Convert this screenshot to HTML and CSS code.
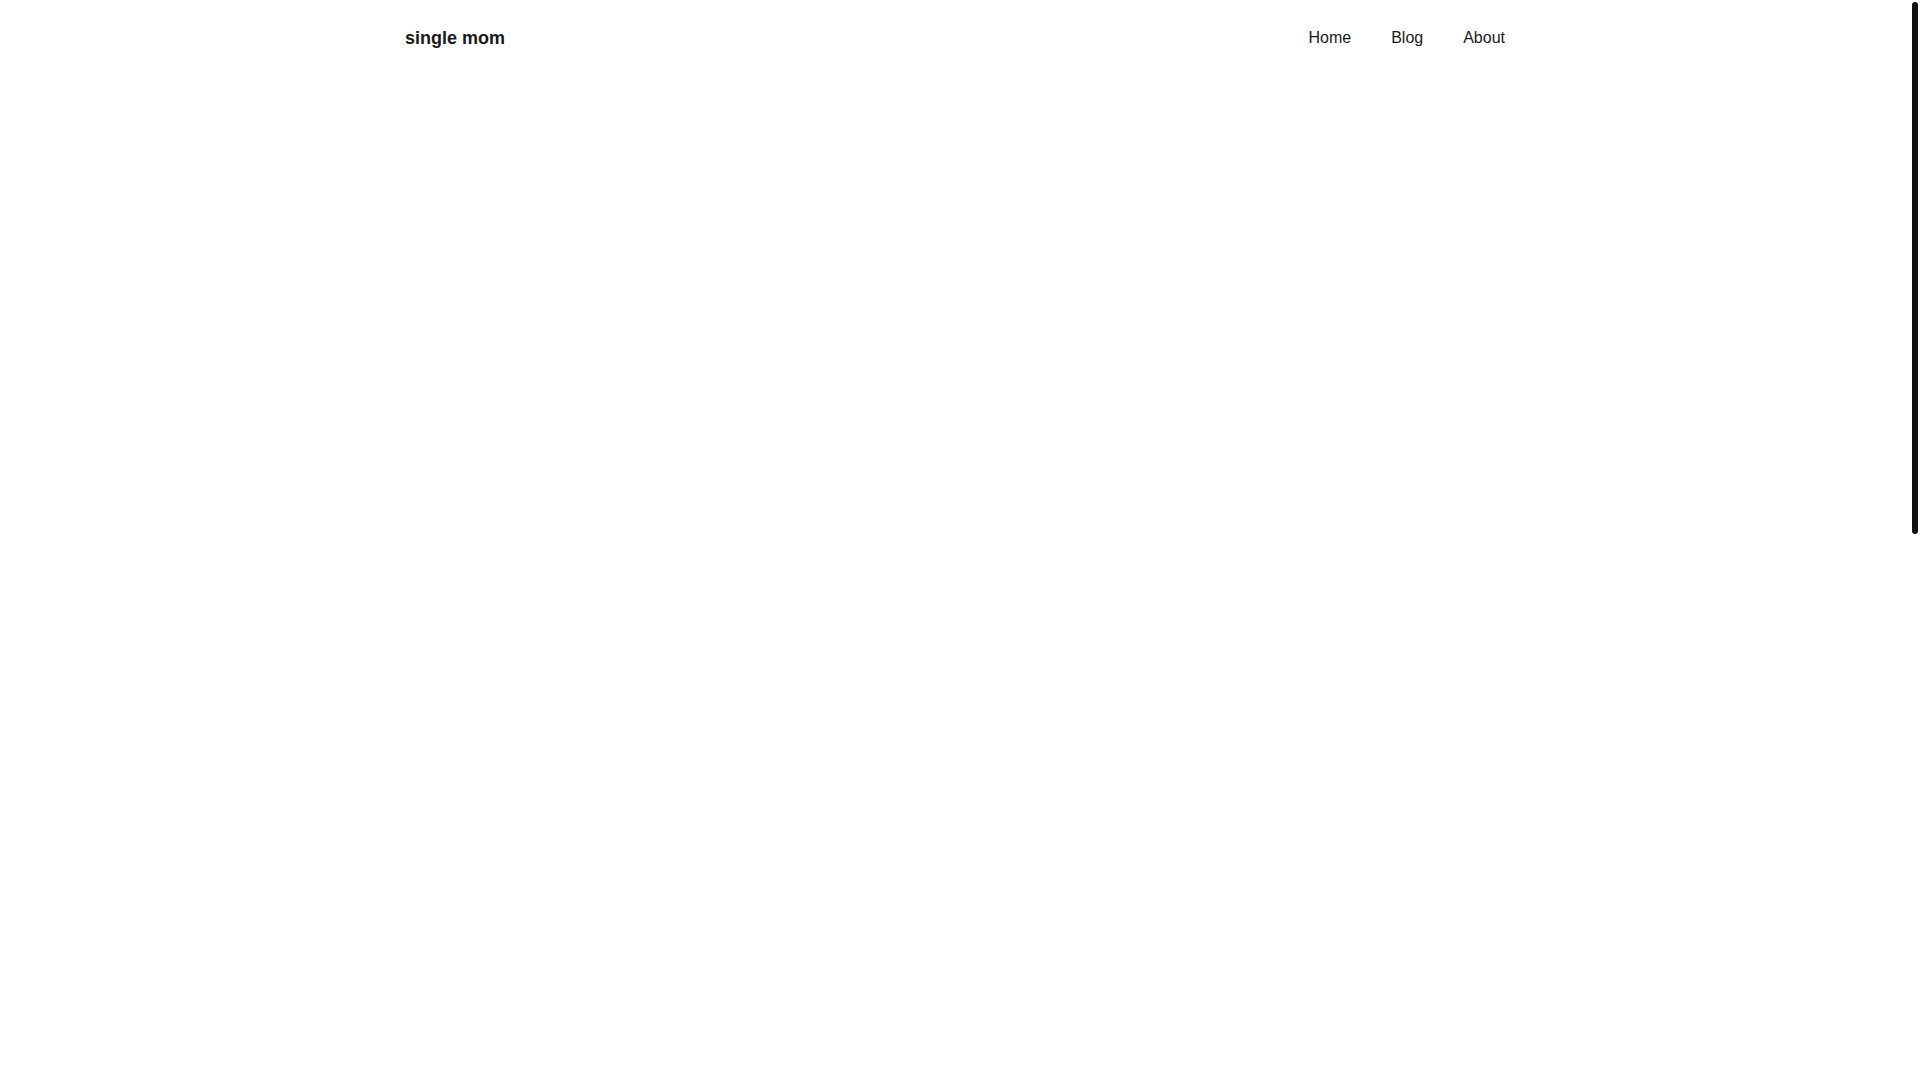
FILE: index.html
```html
<!DOCTYPE html>
<html lang="en">
<head>
  <meta charset="UTF-8" />
  <meta name="viewport" content="width=device-width, initial-scale=1.0"/>
  <title>single mom</title>
  <link rel="stylesheet" href="styles.css">
</head>
<body>
  <div class="page">
    <header class="site-header">
      <div class="container header-inner">
        <a class="brand" href="#">single mom</a>
        <nav class="nav">
          <a href="#">Home</a>
          <a href="#">Blog</a>
          <a href="#">About</a>
        </nav>
      </div>
    </header>

    <main class="content"></main>
  </div>

  <!-- slim scroll rail on the right edge -->
  <div class="scroll-rail">
    <div class="scroll-thumb"></div>
  </div>
</body>
</html>
```

FILE: styles.css
```css
body {
  margin: 0;
  font-family: 'Liberation Sans', Arial, sans-serif;
  background: #fff;
  color: #1a1a1a;
}

.page {
  margin-right: 10px;
}

.container {
  max-width: 1100px;
  margin: 0 auto;
}

.header-inner {
  display: flex;
  justify-content: space-between;
  align-items: center;
  height: 76px;
}

.brand {
  font-size: 18px;
  font-weight: bold;
  color: #1a1a1a;
  text-decoration: none;
}

.nav {
  display: flex;
  gap: 40px;
}

.nav a {
  font-size: 16px;
  color: #1a1a1a;
  text-decoration: none;
}

.scroll-rail {
  position: fixed;
  top: 0;
  right: 0;
  width: 10px;
  height: 100vh;
  background: #fff;
}

.scroll-thumb {
  margin: 2px 2px 0;
  height: 532px;
  background: #111;
  border-radius: 3px;
}
```
